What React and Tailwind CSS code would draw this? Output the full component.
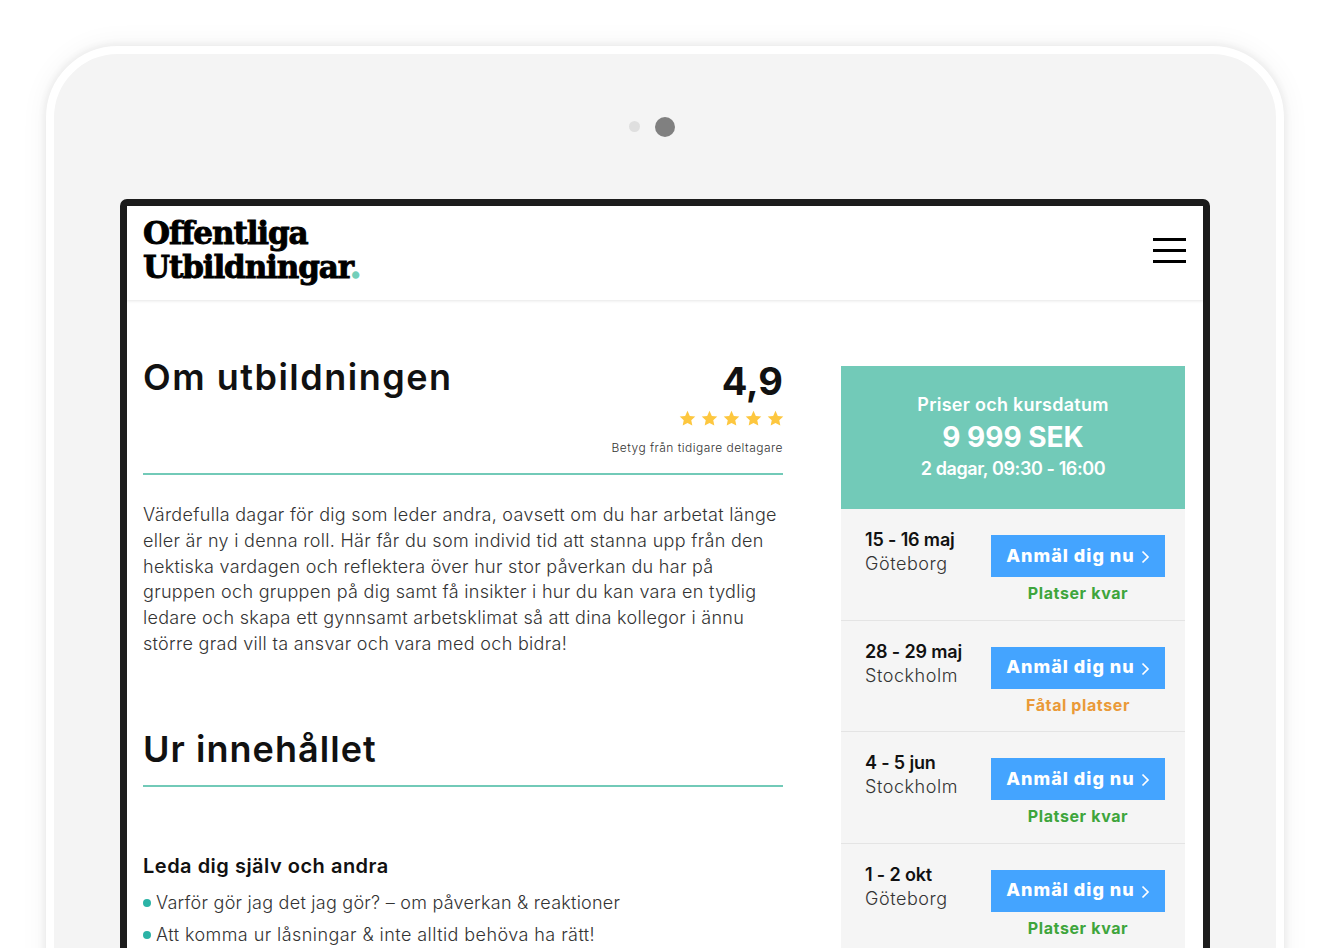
import React from "react";

const sans = "font-['Inter','Liberation_Sans',sans-serif]";

function Star() {
  return (
    <svg width="17" height="17" viewBox="0 0 24 24" className="fill-[#fdc73f]">
      <path d="M12 1.2l3.3 7.1 7.7.9-5.7 5.2 1.5 7.6L12 18.2l-6.8 3.8 1.5-7.6L1 9.2l7.7-.9z" />
    </svg>
  );
}

const paragraph = [
  "Värdefulla dagar för dig som leder andra, oavsett om du har arbetat länge",
  "eller är ny i denna roll. Här får du som individ tid att stanna upp från den",
  "hektiska vardagen och reflektera över hur stor påverkan du har på",
  "gruppen och gruppen på dig samt få insikter i hur du kan vara en tydlig",
  "ledare och skapa ett gynnsamt arbetsklimat så att dina kollegor i ännu",
  "större grad vill ta ansvar och vara med och bidra!",
];

const dates = [
  { d: "15 - 16 maj", p: "Göteborg", s: "Platser kvar", c: "text-[#3ea53c]" },
  { d: "28 - 29 maj", p: "Stockholm", s: "Fåtal platser", c: "text-[#ea9a38]" },
  { d: "4 - 5 jun", p: "Stockholm", s: "Platser kvar", c: "text-[#3ea53c]" },
  { d: "1 - 2 okt", p: "Göteborg", s: "Platser kvar", c: "text-[#3ea53c]" },
];

function DateRow({ d, p, s, c }) {
  return (
    <div className="flex h-[111.67px] shrink-0 border-b border-[#e4e4e4] pl-6 pr-5 pt-[18px]">
      <div className="flex-1 pt-[1px]">
        <div className="text-[18px] leading-6 font-semibold tracking-[-0.15px] text-[#111]">{d}</div>
        <div className="text-[18px] leading-6 font-light text-[#333] tracking-[0.55px]">{p}</div>
      </div>
      <div className="w-[174px] pt-[8px]">
        <div className="flex h-[42px] items-center justify-center gap-[6px] bg-[#44a4ff] text-white">
          <span className="text-[18px] leading-[26px] pb-[1px] font-extrabold tracking-[1px] whitespace-nowrap">Anmäl dig nu</span>
          <svg width="9" height="14" viewBox="0 0 9 14" fill="none" stroke="white" strokeWidth="1.7" className="mt-[2px]">
            <path d="M1.5 1.5 7 7l-5.5 5.5" />
          </svg>
        </div>
        <div className={`mt-[5px] text-center text-[16px] leading-[22px] font-bold tracking-[0.6px] ${c}`}>{s}</div>
      </div>
    </div>
  );
}

export default function App() {
  return (
    <div className={`h-[948px] w-[1336px] overflow-hidden bg-white pl-[46px] pt-[46px] ${sans}`}>
      <div className="h-[1100px] w-[1238px] rounded-[72px] border-8 border-white bg-[#f4f4f4] px-[66px] shadow-[0_0_6px_3px_rgba(0,0,0,0.05),0_0_24px_6px_rgba(0,0,0,0.035)]">
        <div className="grid h-[145px] grid-cols-[1fr_auto_1fr] items-center">
          <div className="flex justify-end pr-[15px]">
            <div className="size-[11px] rounded-full bg-[#dfdfdf]" />
          </div>
          <div className="size-[20px] rounded-full bg-[#808080]" />
          <div />
        </div>
        <div className="h-[900px] rounded-[7px] border-7 border-[#1c1c1c] bg-white">
          <header className="flex h-[94px] items-center justify-between pl-4 pr-[17px] shadow-[0_1px_3px_rgba(0,0,0,0.1)]">
            <div className="mb-[7px] font-['DejaVu_Serif',serif] text-[31px] leading-[34px] font-bold tracking-[-1.1px] text-black [-webkit-text-stroke:0.9px_black]">
              <div>Offentliga</div>
              <div>
                Utbildningar<span className="text-[#72cfb9] [-webkit-text-stroke:1.5px_#72cfb9]">.</span>
              </div>
            </div>
            <div className="mb-[6px] flex w-[33px] flex-col gap-[8px]">
              <div className="h-[3px] bg-black" />
              <div className="h-[3px] bg-black" />
              <div className="h-[3px] bg-black" />
            </div>
          </header>

          <div className="flex justify-between pl-4 pr-[18px] pt-[66px]">
            <main className="w-[640px]">
              <div className="flex justify-between border-b-2 border-[#72cab8] pb-[17px]">
                <h1 className="text-[36px] leading-[22px] font-semibold tracking-[1.5px] text-[#111]">Om utbildningen</h1>
                <div className="flex flex-col items-end">
                  <div className="text-[38px] leading-[30px] font-bold text-[#111]">4,9</div>
                  <div className="mt-[14px] -mr-px flex gap-[5px]">
                    <Star /><Star /><Star /><Star /><Star />
                  </div>
                  <div className="mt-[13px] text-[12px] leading-[16px] font-light text-[#333] tracking-[0.46px]">Betyg från tidigare deltagare</div>
                </div>
              </div>

              <p className="mt-[27px] text-[18px] leading-[25.75px] font-light text-[#333] tracking-[0.3px]">
                {paragraph.map((l) => (
                  <span key={l} className="block whitespace-nowrap">{l}</span>
                ))}
              </p>

              <h2 className="mt-[70px] border-b-2 border-[#72cab8] pb-[14px] text-[36px] leading-[44px] font-semibold tracking-[1.05px] text-[#111]">Ur innehållet</h2>

              <h3 className="mt-[65px] text-[20px] leading-[28px] font-semibold tracking-[0.5px] text-[#111]">Leda dig själv och andra</h3>
              <ul className="mt-[7px] text-[18px] leading-[32px] font-light text-[#333]">
                <li className="flex items-center gap-[5px] tracking-[0.25px]">
                  <span className="size-[8px] rounded-full bg-[#2bb3a6]" />
                  Varför gör jag det jag gör? – om påverkan &amp; reaktioner
                </li>
                <li className="flex items-center gap-[5px] tracking-[0.43px]">
                  <span className="size-[8px] rounded-full bg-[#2bb3a6]" />
                  Att komma ur låsningar &amp; inte alltid behöva ha rätt!
                </li>
              </ul>
            </main>

            <aside className="w-[344px]">
              <div className="flex h-[143px] flex-col items-center justify-center bg-[#72cab8] pb-[1px] text-white">
                <div className="text-[18px] leading-[26px] font-semibold tracking-[0.25px]">Priser och kursdatum</div>
                <div className="mt-[1px] text-[28px] leading-[36px] font-bold">9 999 SEK</div>
                <div className="mt-[1px] text-[18px] leading-[26px] font-semibold tracking-[-0.4px]">2 dagar, 09:30 - 16:00</div>
              </div>
              <div className="bg-[#f5f5f5]">
                {dates.map((r) => (
                  <DateRow key={r.d} {...r} />
                ))}
              </div>
            </aside>
          </div>
        </div>
      </div>
    </div>
  );
}
